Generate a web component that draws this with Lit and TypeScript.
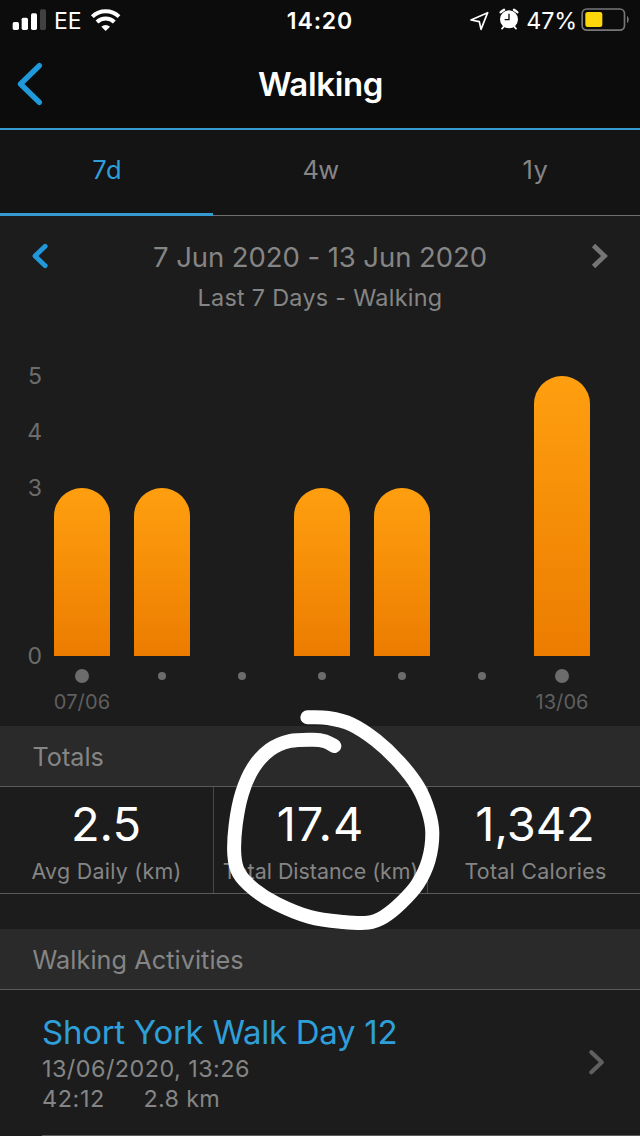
import { LitElement, html, css, svg } from 'lit';
import { customElement, property } from 'lit/decorators.js';
import { classMap } from 'lit/directives/class-map.js';

type Point = [number, number];

/** Catmull-Rom spline through the given points, as an SVG path. */
function smoothPath(points: Point[]): string {
  let d = `M${points[0][0]} ${points[0][1]}`;
  for (let i = 0; i < points.length - 1; i++) {
    const p0 = points[Math.max(0, i - 1)];
    const p1 = points[i];
    const p2 = points[i + 1];
    const p3 = points[Math.min(points.length - 1, i + 2)];
    const c1 = [p1[0] + (p2[0] - p0[0]) / 6, p1[1] + (p2[1] - p0[1]) / 6];
    const c2 = [p2[0] - (p3[0] - p1[0]) / 6, p2[1] - (p3[1] - p1[1]) / 6];
    d += `C${c1[0]} ${c1[1]} ${c2[0]} ${c2[1]} ${p2[0]} ${p2[1]}`;
  }
  return d;
}

const INK: Point[] = [
  [292, 52], [354, 54], [424, 73], [498, 121], [568, 187], [625, 262], [656, 336],
  [667, 400], [656, 480], [623, 552], [572, 610], [522, 650], [474, 668], [400, 666],
  [300, 651], [200, 611], [132, 568], [87, 520], [73, 465], [77, 375], [96, 280],
  [130, 203], [180, 149], [240, 123], [310, 119], [346, 124], [373, 138],
];

@customElement('status-bar')
class StatusBar extends LitElement {
  static styles = css`
    :host {
      display: grid;
      grid-template-columns: 1fr auto 1fr;
      height: 41px;
      color: #fff;
      font-size: 23px;
      line-height: 42px;
    }
    .left, .right { display: flex; align-items: flex-start; }
    .left { padding-left: 12px; }
    .right { justify-content: flex-end; padding-right: 10px; }
    .carrier { margin-left: 6px; }
    .time { font-weight: 600; letter-spacing: 0.9px; }
    .percent { font-size: 23.3px; letter-spacing: -0.12px; margin-left: 7px; }
    svg { display: block; flex: none; }
    .wifi { margin-left: 8px; }
    .alarm { margin-left: 9px; }
    .battery { margin-left: 4px; }
  `;

  render() {
    return html`
      <div class="left">
        <svg width="36" height="41" viewBox="0 0 108 123" fill="#fff">
          <rect x="2" y="66" width="19" height="24" rx="5" />
          <rect x="29" y="53" width="19" height="37" rx="5" />
          <rect x="57" y="40" width="18" height="50" rx="5" />
          <rect x="84" y="28" width="18" height="62" rx="5" fill="#414141" />
        </svg>
        <span class="carrier">EE</span>
        <svg class="wifi" width="32" height="41" viewBox="0 0 96 123" fill="none" stroke="#fff" stroke-width="12">
          <path d="M7 50A58 58 0 0 1 87 50" />
          <path d="M21 66A37 37 0 0 1 73 66" />
          <path d="M47 93L34 80A19 19 0 0 1 60 80Z" fill="#fff" stroke="none" />
        </svg>
      </div>
      <div class="time">14:20</div>
      <div class="right">
        <svg width="21" height="41" viewBox="0 0 63 123" fill="none" stroke="#fff" stroke-width="5" stroke-linejoin="round">
          <path d="M6 60L56 38L36 88L31 65Z" />
        </svg>
        <svg class="alarm" width="20" height="41" viewBox="0 0 60 123">
          <circle cx="30" cy="58" r="27" fill="#fff" />
          <path d="M15 79L9 86M45 79L51 86" stroke="#fff" stroke-width="5" stroke-linecap="round" />
          <path d="M5 37A34 34 0 0 1 15 29.500M55 37A34 34 0 0 0 45 29.500" stroke="#fff" stroke-width="7" stroke-linecap="round" fill="none" />
          <path d="M30 41V59H17" stroke="#0c0c0c" stroke-width="4" fill="none" />
        </svg>
        <span class="percent">47%</span>
        <svg class="battery" width="49" height="41" viewBox="0 0 147 123">
          <rect x="3.500" y="27" width="127" height="63.500" rx="14" fill="none" stroke="#77777a" stroke-width="5" />
          <rect x="13" y="36" width="51" height="45" rx="7" fill="#ffd60a" />
          <path d="M138 48C145 51 145 66 138 69Z" fill="#77777a" />
        </svg>
      </div>
    `;
  }
}

@customElement('bar-chart')
class BarChart extends LitElement {
  @property({ attribute: false }) values: number[] = [];
  @property({ type: Number }) max = 5;

  static styles = css`
    :host { display: flex; color: #6c6c6c; }
    .axis { display: flex; flex-direction: column; width: 42px; }
    .tick { height: 56px; line-height: 56px; font-size: 23px; text-align: right; }
    .tick:last-child { margin-top: 112px; }
    .plot { display: grid; grid-template-columns: repeat(7, 80px); padding-top: 28px; }
    .column { display: flex; flex-direction: column; align-items: center; }
    .track { display: flex; align-items: flex-end; height: 280px; }
    .bar { width: 56px; border-radius: 28px 28px 0 0; background: linear-gradient(#ff9f0f, #ec7c00); }
    .mark { display: flex; align-items: center; height: 40px; }
    .dot { width: 8px; height: 8px; border-radius: 50%; background: #6c6c6c; }
    .dot.end { width: 14px; height: 14px; }
    .date { margin-top: -8px; height: 28px; line-height: 28px; font-size: 20px; color: #5f5f5f; letter-spacing: 0.100px; }
  `;

  render() {
    const last = this.values.length - 1;
    return html`
      <div class="axis">
        ${[5, 4, 3, 0].map((n) => html`<div class="tick">${n}</div>`)}
      </div>
      <div class="plot">
        ${this.values.map(
          (v, i) => html`
            <div class="column">
              <div class="track">
                <div class="bar" style="height:${(v / this.max) * 280}px"></div>
              </div>
              <div class="mark">
                <div class=${classMap({ dot: true, end: i === 0 || i === last })}></div>
              </div>
              <div class="date">${i === 0 ? '07/06' : i === last ? '13/06' : ''}</div>
            </div>
          `,
        )}
      </div>
    `;
  }
}

@customElement('app-root')
class AppRoot extends LitElement {
  static styles = css`
    :host {
      display: block;
      position: relative;
      width: 640px;
      height: 1136px;
      overflow: hidden;
      background: #1c1c1c;
      color: #858585;
      font-family: Inter, "Noto Sans", sans-serif;
      white-space: nowrap;
    }
    svg { display: block; }
    .top { height: 128px; background: #0c0c0c; border-bottom: 2px solid #359bd1; }
    .nav { display: grid; grid-template-columns: 60px 1fr 60px; height: 87px; align-items: center; }
    .title {
      margin: 0; text-align: center; color: #fff; font-size: 33px; line-height: 87px;
      font-weight: 600; letter-spacing: -0.350px; padding-left: 1px;
    }
    .tabs { display: grid; grid-template-columns: repeat(3, 1fr); height: 86px; background: #141414; box-shadow: inset 0 -1px #6e6e6e; }
    .tab { text-align: center; font-size: 25.500px; line-height: 80px; box-sizing: border-box; }
    .tab.active { color: #2f9fda; border-bottom: 3px solid #359bd1; letter-spacing: 0.600px; padding-left: 1px; }
    .tab.narrow { letter-spacing: -0.800px; padding-left: 1px; }
    .tab.last { letter-spacing: 0.500px; padding-left: 4px; }
    .range { display: grid; grid-template-columns: 80px 1fr 80px; padding-top: 20px; }
    .dates { text-align: center; font-size: 27.500px; line-height: 42px; letter-spacing: -0.070px; }
    .caption { text-align: center; font-size: 23.400px; line-height: 40px; letter-spacing: 0.270px; }
    bar-chart { margin-top: 30px; height: 378px; }
    .section {
      height: 60px; margin: 0; padding-left: 32.500px; background: #2a2a2a; border-bottom: 1px solid #5a5a5a;
      font-size: 25.200px; line-height: 62px; font-weight: 400; letter-spacing: 0;
    }
    .section.wide { letter-spacing: 0.080px; }
    .stats { display: grid; grid-template-columns: 214px 214px 212px; height: 106px; border-bottom: 1px solid #5a5a5a; margin-bottom: 35px; }
    .stat { text-align: center; box-sizing: border-box; border-right: 1px solid #484848; }
    .stat:last-child { border-right: 0; padding-left: 3px; }
    .value { color: #fff; font-size: 47px; line-height: 74px; letter-spacing: 0; margin-left: -1px; }
    .value.wide { letter-spacing: 1px; margin-left: 0; }
    .label { font-size: 21.400px; line-height: 22px; letter-spacing: 0.280px; margin-top: -1.500px; }
    .label.tight { letter-spacing: 0; }
    .activity { display: grid; grid-template-columns: 1fr 66px; height: 145px; margin-left: 42px; border-bottom: 1px solid #5a5a5a; }
    .name { color: #2f9fda; font-size: 33px; line-height: 50px; letter-spacing: -0.280px; padding-top: 17px; }
    .meta { font-size: 23.400px; line-height: 30px; letter-spacing: 0.450px; margin-top: -3.500px; }
    .meta + .meta { display: flex; gap: 38.500px; margin-top: 0; letter-spacing: 0.600px; }
    .meta .distance { letter-spacing: 0.300px; }
    .ink { position: absolute; left: 210px; top: 700px; }
  `;

  private stats = [
    { value: '2.5', label: 'Avg Daily (km)' },
    { value: '17.4', label: 'Total Distance (km)', fit: true },
    { value: '1,342', label: 'Total Calories' },
  ];

  render() {
    return html`
      <header class="top">
        <status-bar></status-bar>
        <div class="nav">
          <svg width="60" height="87" viewBox="0 0 60 87" fill="none" stroke="#2099dc" stroke-width="5.400" stroke-linecap="round" stroke-linejoin="round">
            <path d="M39.300 24.700L20.500 43L39.300 61.300" />
          </svg>
          <h1 class="title">Walking</h1>
        </div>
      </header>
      <nav class="tabs">
        <div class="tab active">7d</div>
        <div class="tab narrow">4w</div>
        <div class="tab last">1y</div>
      </nav>
      <div class="range">
        <svg width="80" height="42" viewBox="0 0 80 42" fill="none" stroke="#2099dc" stroke-width="4.800" stroke-linecap="round" stroke-linejoin="round">
          <path d="M45.200 10.300L35 20L45.200 29.700" />
        </svg>
        <div class="dates">7 Jun 2020 - 13 Jun 2020</div>
        <svg width="80" height="42" viewBox="0 0 80 42" fill="none" stroke="#757575" stroke-width="4.800">
          <path d="M33.500 9.500L44.500 20L33.500 30.500" />
        </svg>
      </div>
      <div class="caption">Last 7 Days - Walking</div>
      <bar-chart .values=${[3, 3, 0, 3, 3, 0, 5]}></bar-chart>
      <h2 class="section">Totals</h2>
      <div class="stats">
        ${this.stats.map(
          (s) => html`
            <div class="stat">
              <div class=${classMap({ value: true, wide: !!s.fit })}>${s.value}</div>
              <div class=${classMap({ label: true, tight: !!s.fit })}>${s.label}</div>
            </div>
          `,
        )}
      </div>
      <h2 class="section wide">Walking Activities</h2>
      <div class="activity">
        <div>
          <div class="name">Short York Walk Day 12</div>
          <div class="meta">13/06/2020, 13:26</div>
          <div class="meta"><span>42:12</span><span class="distance">2.8 km</span></div>
        </div>
        <svg width="66" height="145" viewBox="0 0 66 145" fill="none" stroke="#606060" stroke-width="4.200" stroke-linecap="round" stroke-linejoin="round">
          <path d="M17.300 62.300L27.800 72.300L17.300 82.300" />
        </svg>
      </div>
      <svg class="ink" width="240" height="240" viewBox="0 0 720 720" fill="none" stroke="#fff" stroke-width="42" stroke-linecap="round" stroke-linejoin="round">
        ${svg`<path d=${smoothPath(INK)} />`}
      </svg>
    `;
  }
}
